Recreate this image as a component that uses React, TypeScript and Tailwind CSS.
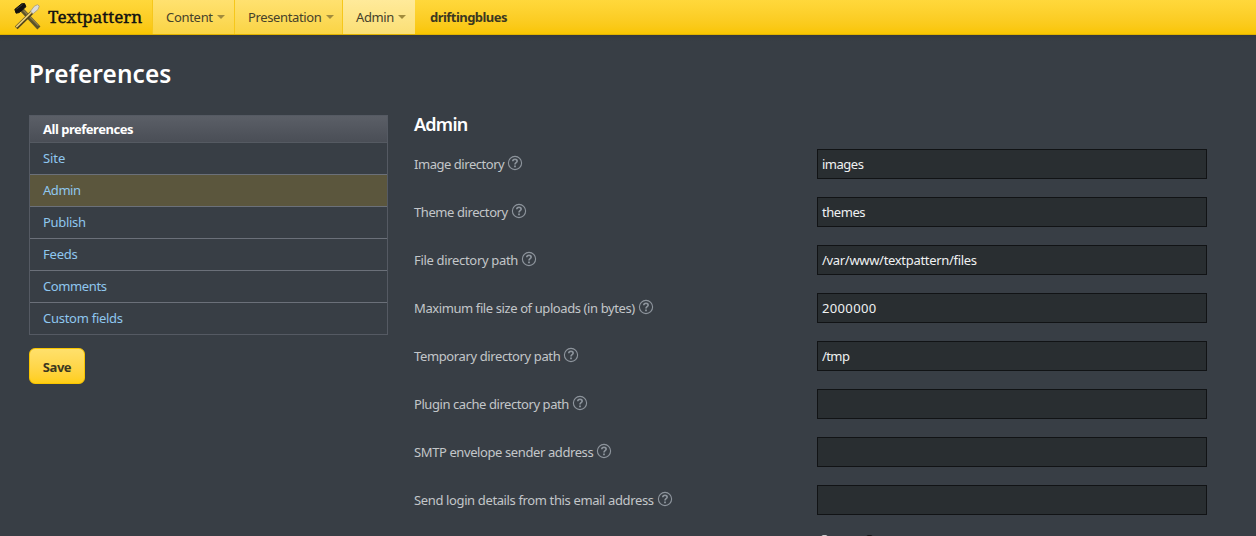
import React from 'react';

const menus = [
  { label: 'Content', box: 'w-[82px]', text: 'w-[47px] tracking-[-0.3px]', bg: 'from-[#ffe16f] to-[#fad443]' },
  { label: 'Presentation', box: 'w-[108px]', text: 'w-[74px] tracking-[-0.36px]', bg: 'from-[#ffe16f] to-[#fad443]' },
  { label: 'Admin', box: 'w-[73px]', text: 'w-[38px] tracking-[-0.4px]', bg: 'from-[#ffea9a] to-[#fbdf75]' },
];

const groups = [
  { label: 'Site', spacing: 'tracking-[-0.1px]' },
  { label: 'Admin', spacing: 'tracking-[-0.45px]' },
  { label: 'Publish', spacing: 'tracking-[-0.3px]' },
  { label: 'Feeds', spacing: 'tracking-[-0.2px]' },
  { label: 'Comments', spacing: 'tracking-[-0.38px]' },
  { label: 'Custom fields', spacing: 'tracking-[-0.27px]' },
];

const fields = [
  { label: 'Image directory', labelSpacing: 'tracking-[-0.46px]', value: 'images', valueSpacing: 'tracking-[-0.5px]' },
  { label: 'Theme directory', labelSpacing: 'tracking-[-0.42px]', value: 'themes', valueSpacing: 'tracking-[-0.45px]' },
  { label: 'File directory path', labelSpacing: 'tracking-[-0.32px]', value: '/var/www/textpattern/files', valueSpacing: 'tracking-[-0.31px]' },
  { label: 'Maximum file size of uploads (in bytes)', labelSpacing: 'tracking-[-0.4px]', value: '2000000', valueSpacing: 'tracking-[0.35px]' },
  { label: 'Temporary directory path', labelSpacing: 'tracking-[-0.38px]', value: '/tmp', valueSpacing: 'tracking-[-0.6px]' },
  { label: 'Plugin cache directory path', labelSpacing: 'tracking-[-0.43px]', value: '', valueSpacing: '' },
  { label: 'SMTP envelope sender address', labelSpacing: 'tracking-[-0.4px]', value: '', valueSpacing: '' },
  { label: 'Send login details from this email address', labelSpacing: 'tracking-[-0.37px]', value: '', valueSpacing: '' },
];

function Logo() {
  return (
    <svg className="ml-[14px] h-[28px] w-[28px] shrink-0" viewBox="0 0 28 28" fill="none">
      <path d="M8.5 7.5 23.5 23.5" stroke="#5d5328" strokeWidth="4.2" strokeLinecap="square" />
      <path d="m9.5 7.5 15 15" stroke="#8d7d48" strokeWidth="1.4" />
      <path d="M.8 6.4 7.6.8l3-.2 1.3 3.2-6.8 5.8-3 .6z" fill="#12110e" stroke="#12110e" strokeLinejoin="round" />
      <path d="m2.5 6.2 6-4.8" stroke="#45423a" />
      <path d="M2.2 24.8 18 9.3" stroke="#4d4018" strokeWidth="3.8" />
      <path d="M2.2 24.2 18 8.7" stroke="#e8cb73" strokeWidth="1.8" />
      <path d="m16.5 8.2 3.8-5 3.2-1.5 1.8 1.4-1.3 3.4-4.9 4.2z" fill="#dcdbd8" stroke="#a89c78" strokeWidth=".8" />
    </svg>
  );
}

function HelpIcon() {
  return (
    <svg className="ml-[3px] h-[16px] w-[16px] shrink-0 -translate-y-px" viewBox="0 0 16 16" fill="none" stroke="#8d949c">
      <circle cx="8" cy="8" r="6.6" strokeWidth="1.15" />
      <path d="M5.8 6.2c0-2.7 4.5-2.5 4.3 0C10 7.7 8 7.7 8 9.4" strokeWidth="1.7" />
      <path d="M8 10.5v1.7" strokeWidth="1.8" />
    </svg>
  );
}

export default function App() {
  return (
    <div className="h-[536px] w-full overflow-hidden bg-[#383e45] font-['Noto_Sans',sans-serif] text-[13px] leading-[18px] text-[#c3c6c9]">
      <header className="flex h-[35px] border-b border-[#e0b100] bg-linear-to-b from-[#ffd83b] to-[#f9c500] text-[#46412a]">
        <div className="flex w-[152px] items-center">
          <Logo />
          <span className="ml-[6px] font-['Noto_Serif','DejaVu_Serif_Condensed','DejaVu_Serif',serif] text-[17px] leading-[32px] tracking-[-0.03px] text-[#111] [-webkit-text-stroke:0.4px_#111]">Textpattern</span>
        </div>
        <nav className="flex">
          {menus.map((m) => (
            <a key={m.label} className={`flex items-center border-l border-[#f6c71b] bg-linear-to-b pl-[13px] ${m.box} ${m.bg}`}>
              <span className={`shrink-0 whitespace-nowrap ${m.text}`}>{m.label}</span>
              <svg className="ml-[4px] h-[4px] w-[8px] shrink-0" viewBox="0 0 8 4"><path d="M0 0h8L4 4z" fill="#a18b3d" /></svg>
            </a>
          ))}
        </nav>
        <span className="ml-[15px] leading-[34px] font-bold tracking-[-0.54px] text-[#3c3820]">driftingblues</span>
      </header>
      <div className="h-[6px] bg-linear-to-b from-[#33373f] to-[#383e45]" />
      <main className="px-[29px] pt-[17px]">
        <h1 className="h-[57px] text-[24.4px] leading-[32px] font-semibold tracking-[0.12px] text-white">Preferences</h1>
        <div className="flex">
          <aside className="w-[359px] shrink-0">
            <div className="border border-[#555a63]">
              <h2 className="h-[27px] border-b border-[#555a62] bg-linear-to-b from-[#5b5f67] to-[#4a4e56] pl-[13px] leading-[27px] font-bold tracking-[-0.48px] text-white">All preferences</h2>
              {groups.map((g) => (
                <a key={g.label} className={`block h-[32px] border-b border-[#6b7079] pl-[13px] leading-[31px] text-[#8fc7ef] last:h-[31px] last:border-b-0 ${g.spacing} ${g.label === 'Admin' ? 'bg-[#5b563d]' : ''}`}>{g.label}</a>
              ))}
            </div>
            <button className="mt-[13px] h-[36px] w-[56px] rounded-[6px] border border-[#f9c500] bg-linear-to-b from-[#ffe06b] to-[#ffce13] pt-[2px] font-bold tracking-[-0.45px] text-[#3c3820]">Save</button>
          </aside>
          <section className="ml-[26px] w-[793px]">
            <h2 className="h-[34px] text-[18px] leading-[19px] font-semibold tracking-[-0.75px] text-white">Admin</h2>
            {fields.map((f) => (
              <div key={f.label} className="mb-[18px] flex h-[30px] items-center">
                <label className={`flex w-[403px] items-center whitespace-nowrap ${f.labelSpacing}`}>{f.label}<HelpIcon /></label>
                <div className={`h-[30px] w-[390px] border border-[#111315] bg-[#292e31] px-[4px] leading-[28px] text-[#eff1f2] ${f.valueSpacing}`}>{f.value}</div>
              </div>
            ))}
            <div className="ml-[404px] flex gap-[32px] pt-[2px]">
              <i className="h-[13px] w-[13px] rounded-full border border-[#e0e0e0] bg-[#eee]" />
              <i className="h-[13px] w-[13px] rounded-full border border-[#111] bg-[#181818]" />
            </div>
          </section>
        </div>
      </main>
    </div>
  );
}
